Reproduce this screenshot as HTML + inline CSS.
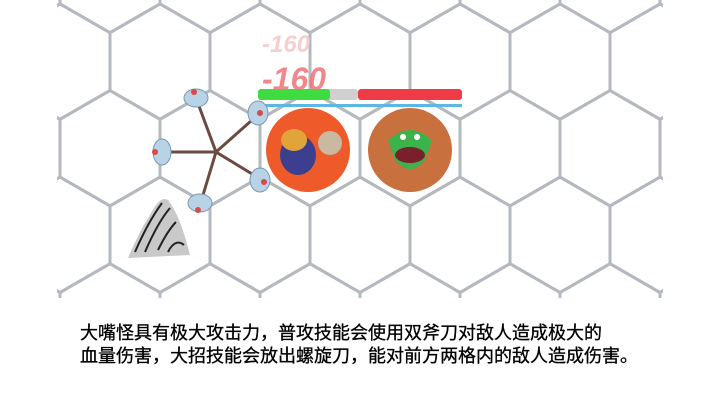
<!DOCTYPE html>
<html><head><meta charset="utf-8"><style>
html,body{margin:0;padding:0;width:720px;height:405px;overflow:hidden;background:#fff}
#t{position:absolute;left:80px;top:322px;font-family:"Liberation Sans","Noto Sans CJK SC",sans-serif;font-size:18px;line-height:23px;color:#000;white-space:nowrap;-webkit-text-stroke:0.3px #000}
svg{position:absolute;left:0;top:0}
</style></head><body>
<svg id="s" width="720" height="405" viewBox="0 0 720 405">
<defs><clipPath id="c"><rect x="57" y="0" width="606" height="298"/></clipPath></defs>
<g id="g" clip-path="url(#c)" fill="none" stroke="#b3b9be" stroke-width="3"></g>
<text x="262" y="52" font-family="Liberation Sans,sans-serif" font-style="italic" font-weight="bold" font-size="24" fill="#f7c9c9" opacity="0.9">-160</text>
<text x="262" y="90" font-family="Liberation Sans,sans-serif" font-style="italic" font-weight="bold" font-size="32" fill="#ee6a6f" opacity="0.8">-160</text>
<rect x="258" y="89" width="100" height="11" rx="3" fill="#d0d0d0"/>
<rect x="258" y="89" width="72" height="11" rx="3" fill="#3fdc3f"/>
<rect x="358" y="89" width="104" height="11" rx="3" fill="#ef3b45"/>
<rect x="258" y="104" width="204" height="3" fill="#5cb8e0"/>
<circle cx="308" cy="150" r="42" fill="#ef5a2b"/>
<ellipse cx="298" cy="155" rx="18" ry="20" fill="#3b3f8e"/>
<ellipse cx="294" cy="140" rx="13" ry="11" fill="#e0a43a"/>
<circle cx="330" cy="143" r="12" fill="#c9b9a0"/>
<circle cx="410" cy="150" r="42" fill="#c9703f"/>
<path d="M395 135 Q410 125 425 135 L432 140 L425 160 Q410 178 395 160 L388 140 Z" fill="#3cb24a"/>
<ellipse cx="410" cy="155" rx="15" ry="8" fill="#7a1f2c"/>
<circle cx="403" cy="137" r="3" fill="#fff"/><circle cx="417" cy="137" r="3" fill="#fff"/>
<g stroke="#6b4a40" stroke-width="3">
<line x1="216" y1="152" x2="196" y2="98"/><line x1="216" y1="152" x2="260" y2="113"/>
<line x1="216" y1="152" x2="158" y2="152"/><line x1="216" y1="152" x2="262" y2="180"/>
<line x1="216" y1="152" x2="200" y2="205"/></g>
<g fill="#b9d3e6" stroke="#7a98b0" stroke-width="1">
<ellipse cx="196" cy="98" rx="12" ry="9"/><ellipse cx="258" cy="113" rx="10" ry="12"/>
<ellipse cx="162" cy="152" rx="9" ry="13"/><ellipse cx="260" cy="180" rx="10" ry="12"/>
<ellipse cx="200" cy="203" rx="12" ry="9"/></g>
<g fill="#d64a4a"><circle cx="194" cy="92" r="3"/><circle cx="260" cy="113" r="3"/><circle cx="155" cy="152" r="3"/><circle cx="264" cy="182" r="3"/><circle cx="198" cy="210" r="3"/></g>
<path d="M128 258 Q140 230 150 215 Q160 195 168 200 Q180 215 190 255 Z" fill="#777" opacity="0.4"/>
<path d="M135 252 Q148 222 162 203 M145 252 Q158 222 170 208 M158 250 Q168 230 176 222 M168 252 Q175 238 184 245" stroke="#222" stroke-width="2" fill="none"/>
</svg>
<div id="t">大嘴怪具有极大攻击力，普攻技能会使用双斧刀对敌人造成极大的<br>血量伤害，大招技能会放出螺旋刀，能对前方两格内的敌人造成伤害。</div>
<script>
var g=document.getElementById('g'),s=57.735,h="";
for(var r=-1;r<5;r++){var cy=-25+r*86.6;var off=(r%2!==0)?0:50;
for(var c=-1;c<8;c++){var cx=60+off+c*100;var p=[];
for(var k=0;k<6;k++){var a=Math.PI/180*(60*k-90);p.push((cx+s*Math.cos(a)).toFixed(1)+","+(cy+s*Math.sin(a)).toFixed(1));}
h+='<polygon points="'+p.join(" ")+'"/>';}}
g.innerHTML=h;
</script>
</body></html>
